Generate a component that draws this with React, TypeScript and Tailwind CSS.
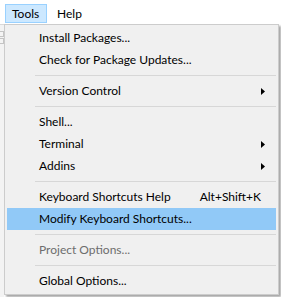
import React from "react";

type Item =
  | { kind: "item"; label: string; shortcut?: string; sub?: boolean; disabled?: boolean; active?: boolean }
  | { kind: "sep" };

const items: Item[] = [
  { kind: "item", label: "Install Packages..." },
  { kind: "item", label: "Check for Package Updates..." },
  { kind: "sep" },
  { kind: "item", label: "Version Control", sub: true },
  { kind: "sep" },
  { kind: "item", label: "Shell..." },
  { kind: "item", label: "Terminal", sub: true },
  { kind: "item", label: "Addins", sub: true },
  { kind: "sep" },
  { kind: "item", label: "Keyboard Shortcuts Help", shortcut: "Alt+Shift+K" },
  { kind: "item", label: "Modify Keyboard Shortcuts...", active: true },
  { kind: "sep" },
  { kind: "item", label: "Project Options...", disabled: true },
  { kind: "sep" },
  { kind: "item", label: "Global Options..." },
];

function Arrow() {
  return (
    <svg width="4" height="7" viewBox="0 0 4 7" className="block">
      <path d="M0 0 L4 3.5 L0 7 Z" fill="#000" />
    </svg>
  );
}

export default function App() {
  return (
    <div
      className="relative h-[297px] w-[281px] overflow-hidden bg-white text-[12px] text-black"
      style={{ fontFamily: 'Lato, "Noto Sans", sans-serif' }}
    >
      {/* menubar */}
      <div className="flex h-[24px] items-start pt-[4px]">
        <div className="ml-[5px] flex h-[19px] w-[42px] items-center border border-[#99d1ff] bg-[#cce8ff] pl-[6px]">
          Tools
        </div>
        <div className="ml-[10px] flex h-[19px] items-center">Help</div>
      </div>

      <div className="flex">
        {/* app toolbar peeking out behind the menu */}
        <div className="flex h-[273px] w-[4px] flex-col gap-[1px] border-t border-[#d9d9d9] bg-[#f3f3f3] pt-[6px]">
          <div className="h-[6px] w-[4px] border border-l-0 border-[#c4c4c4] bg-[#f4f4f4]" />
          <div className="h-[6px] w-[4px] border border-l-0 border-[#c4c4c4] bg-[#f4f4f4]" />
        </div>
        <div className="w-[275px] self-start border border-[#cccccc] bg-[#f0f0f0] py-[2px] shadow-[2px_2px_2px_rgba(0,0,0,0.35)]">
          {items.map((it, i) =>
            it.kind === "sep" ? (
              <div key={i} className="flex h-[9px] items-center pl-[30px] pr-[2px]">
                <div className="h-[1px] w-full bg-[#d7d7d7]" />
              </div>
            ) : (
              <div
                key={i}
                className={
                  "mx-[2px] flex h-[22px] items-center pl-[32px] pr-[11px] " +
                  (it.active ? "bg-[#91c9f7] " : "") +
                  (it.disabled ? "text-[#6d6d6d]" : "text-black")
                }
              >
                <span className="flex-1 whitespace-nowrap">{it.label}</span>
                {it.shortcut && <span className="mr-[4px] whitespace-nowrap">{it.shortcut}</span>}
                {it.sub && <Arrow />}
              </div>
            )
          )}
        </div>
      </div>
    </div>
  );
}
